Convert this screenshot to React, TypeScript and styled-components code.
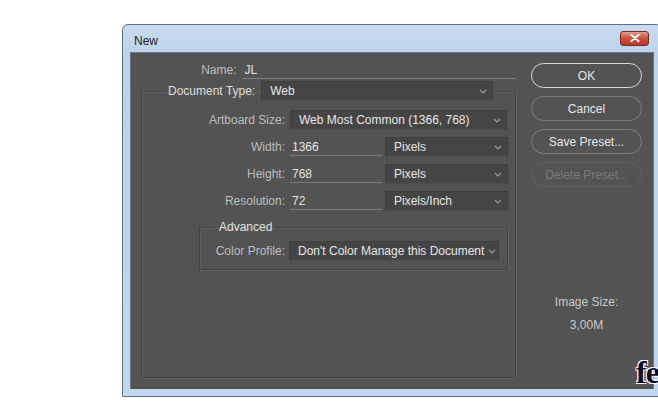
import React from 'react';
import styled, { createGlobalStyle } from 'styled-components';

const GlobalStyle = createGlobalStyle`
  html, body {
    margin: 0;
    padding: 0;
    background: #ffffff;
    overflow: hidden;
  }
  body {
    width: 658px;
    height: 419px;
    font-family: 'Liberation Sans', Arial, sans-serif;
  }
`;

const Chevron: React.FC = () => (
  <svg width="8" height="5" viewBox="0 0 8 5">
    <polyline points="1,1 4,4 7,1" fill="none" stroke="#9a9a9a" strokeWidth="1.2" />
  </svg>
);

const Select: React.FC<{ value: string; width: number }> = ({ value, width }) => (
  <Dropdown style={{ width }}>
    <span>{value}</span>
    <Chevron />
  </Dropdown>
);

const App: React.FC = () => {
  return (
    <Page>
      <GlobalStyle />
      <Window>
        <TitleBar>
          <Title>New</Title>
          <CloseButton>
            <svg width="10" height="8" viewBox="0 0 10 8">
              <path d="M1.5 1 L8.5 7 M8.5 1 L1.5 7" stroke="#fff" strokeWidth="2.2" strokeLinecap="round" />
            </svg>
          </CloseButton>
        </TitleBar>
        <Body>
          <FormColumn>
            <NameRow>
              <NameLabel>Name:</NameLabel>
              <TextField $width={275}>JL</TextField>
            </NameRow>
            <Group>
              <GroupLegend>
                <LegendLabel>Document Type:</LegendLabel>
                <Select value="Web" width={232} />
              </GroupLegend>
              <Rows>
                <Row>
                  <RowLabel>Artboard Size:</RowLabel>
                  <Select value="Web Most Common (1366, 768)" width={217} />
                </Row>
                <Row>
                  <RowLabel>Width:</RowLabel>
                  <TextField $width={92}>1366</TextField>
                  <Select value="Pixels" width={123} />
                </Row>
                <Row>
                  <RowLabel>Height:</RowLabel>
                  <TextField $width={92}>768</TextField>
                  <Select value="Pixels" width={123} />
                </Row>
                <Row>
                  <RowLabel>Resolution:</RowLabel>
                  <TextField $width={92}>72</TextField>
                  <Select value="Pixels/Inch" width={123} />
                </Row>
              </Rows>
              <Advanced>
                <AdvancedLegend>Advanced</AdvancedLegend>
                <AdvancedRow>
                  <RowLabel $short>Color Profile:</RowLabel>
                  <Select value="Don't Color Manage this Document" width={210} />
                </AdvancedRow>
              </Advanced>
            </Group>
          </FormColumn>
          <ButtonColumn>
            <PillButton $variant="default">OK</PillButton>
            <PillButton>Cancel</PillButton>
            <PillButton>Save Preset...</PillButton>
            <PillButton $variant="disabled">Delete Preset...</PillButton>
            <ImageSize>
              <div>Image Size:</div>
              <div>3,00M</div>
            </ImageSize>
          </ButtonColumn>
        </Body>
      </Window>
      <Watermark>fe</Watermark>
    </Page>
  );
};

const Page = styled.div`
  position: relative;
  width: 658px;
  height: 419px;
  padding: 24px 0 0 122px;
  box-sizing: border-box;
`;

const Window = styled.div`
  width: 540px;
  height: 373px;
  box-sizing: border-box;
  border: 1px solid #5f6f80;
  border-radius: 6px 6px 0 0;
  background: linear-gradient(#c9dbef, #bcd3ea 30px, #bfd6ee);
  padding: 0 7px 7px 7px;
  display: flex;
  flex-direction: column;
`;

const TitleBar = styled.div`
  height: 27px;
  display: flex;
  align-items: center;
  justify-content: space-between;
  padding: 0 0 0 4px;
`;

const Title = styled.div`
  font-family: 'Liberation Sans', Arial, sans-serif;
  font-size: 12px;
  color: #1e1e1e;
  margin-top: 4px;
`;

const CloseButton = styled.div`
  width: 29px;
  height: 15px;
  margin-right: 5px;
  margin-top: -1px;
  box-sizing: border-box;
  border: 1px solid #7a2a20;
  border-radius: 3px;
  background: linear-gradient(#e29a8d, #c9503e 50%, #b83a28);
  display: flex;
  align-items: center;
  justify-content: center;
`;

const Body = styled.div`
  flex: 1;
  background: #535353;
  display: flex;
  padding: 10px 10px 0 10px;
  gap: 15px;
  border: 1px solid #6c7886;
  border-bottom: none;
`;

const FormColumn = styled.div`
  width: 375px;
  display: flex;
  flex-direction: column;
`;

const NameRow = styled.div`
  display: flex;
  align-items: flex-end;
  height: 16px;
  gap: 6px;
`;

const NameLabel = styled.div`
  width: 96px;
  text-align: right;
  font-size: 12px;
  color: #bdbdbd;
  padding-bottom: 2px;
`;

const TextField = styled.div<{ $width: number }>`
  width: ${p => p.$width}px;
  height: 18px;
  box-sizing: border-box;
  border-bottom: 1px solid #7c7c7c;
  font-size: 12px;
  color: #e4e4e4;
  padding: 2px 0 0 2px;
  line-height: 14px;
`;

const Group = styled.fieldset`
  margin: 2px 0 0 0;
  padding: 0 0 0 0;
  height: 297px;
  box-sizing: border-box;
  border: 1px solid #444444;
  box-shadow: inset 1px 1px 0 #5e5e5e, 1px 1px 0 #5e5e5e;
`;

const GroupLegend = styled.legend`
  display: flex;
  align-items: center;
  gap: 6px;
  padding: 0 0 0 6px;
  margin-left: 20px;
`;

const LegendLabel = styled.span`
  font-size: 12px;
  color: #dedede;
  padding-right: 0;
`;

const Dropdown = styled.div`
  height: 20px;
  box-sizing: border-box;
  background: #454545;
  border: 1px solid #3e3e3e;
  border-bottom-color: #4d4d4d;
  display: flex;
  align-items: center;
  justify-content: space-between;
  gap: 4px;
  padding: 0 5px 0 8px;
  font-size: 12px;
  color: #e6e6e6;
  white-space: nowrap;
  overflow: hidden;

  & > svg {
    flex-shrink: 0;
  }
`;

const Rows = styled.div`
  display: flex;
  flex-direction: column;
  gap: 7px;
  margin-top: 9px;
`;

const Row = styled.div`
  display: flex;
  align-items: center;
  height: 20px;
  gap: 5px;

  & > div:nth-child(3) {
    margin-left: -2px;
  }
`;

const RowLabel = styled.div<{ $short?: boolean }>`
  width: ${p => (p.$short ? 85 : 143)}px;
  text-align: right;
  font-size: 12px;
  color: #bdbdbd;
  flex-shrink: 0;
`;

const Advanced = styled.fieldset`
  margin: 9px 7px 0 57px;
  padding: 0 0 8px 0;
  border: 1px solid #444444;
  box-shadow: inset 1px 1px 0 #5e5e5e, 1px 1px 0 #5e5e5e;
`;

const AdvancedLegend = styled.legend`
  font-size: 12px;
  color: #e2e2e2;
  padding: 0 3px;
  margin-left: 16px;
`;

const AdvancedRow = styled.div`
  display: flex;
  align-items: center;
  gap: 4px;
  margin-top: 7px;
`;

const ButtonColumn = styled.div`
  width: 111px;
  display: flex;
  flex-direction: column;
  gap: 8px;
`;

const PillButton = styled.div<{ $variant?: 'default' | 'disabled' }>`
  height: 25px;
  box-sizing: border-box;
  border-radius: 13px;
  border: ${p =>
    p.$variant === 'default'
      ? '1.5px solid #d6d6d6'
      : p.$variant === 'disabled'
      ? '1px solid #5f5f5f'
      : '1px solid #7e7e7e'};
  color: ${p => (p.$variant === 'disabled' ? '#7b7b7b' : '#e6e6e6')};
  font-size: 12px;
  display: flex;
  align-items: center;
  justify-content: center;
`;

const ImageSize = styled.div`
  margin-top: 100px;
  display: flex;
  flex-direction: column;
  align-items: center;
  gap: 9px;
  font-size: 12px;
  color: #c8c8c8;
`;

const Watermark = styled.div`
  position: absolute;
  left: 636px;
  top: 354px;
  font-family: 'Liberation Serif', 'Times New Roman', serif;
  font-weight: bold;
  font-size: 32px;
  color: #0c0c30;
  text-shadow: 1px 1px 0 #fff, -1px -1px 0 #fff, 1px -1px 0 #fff, -1px 1px 0 #fff;
  letter-spacing: -1px;
`;

export default App;
